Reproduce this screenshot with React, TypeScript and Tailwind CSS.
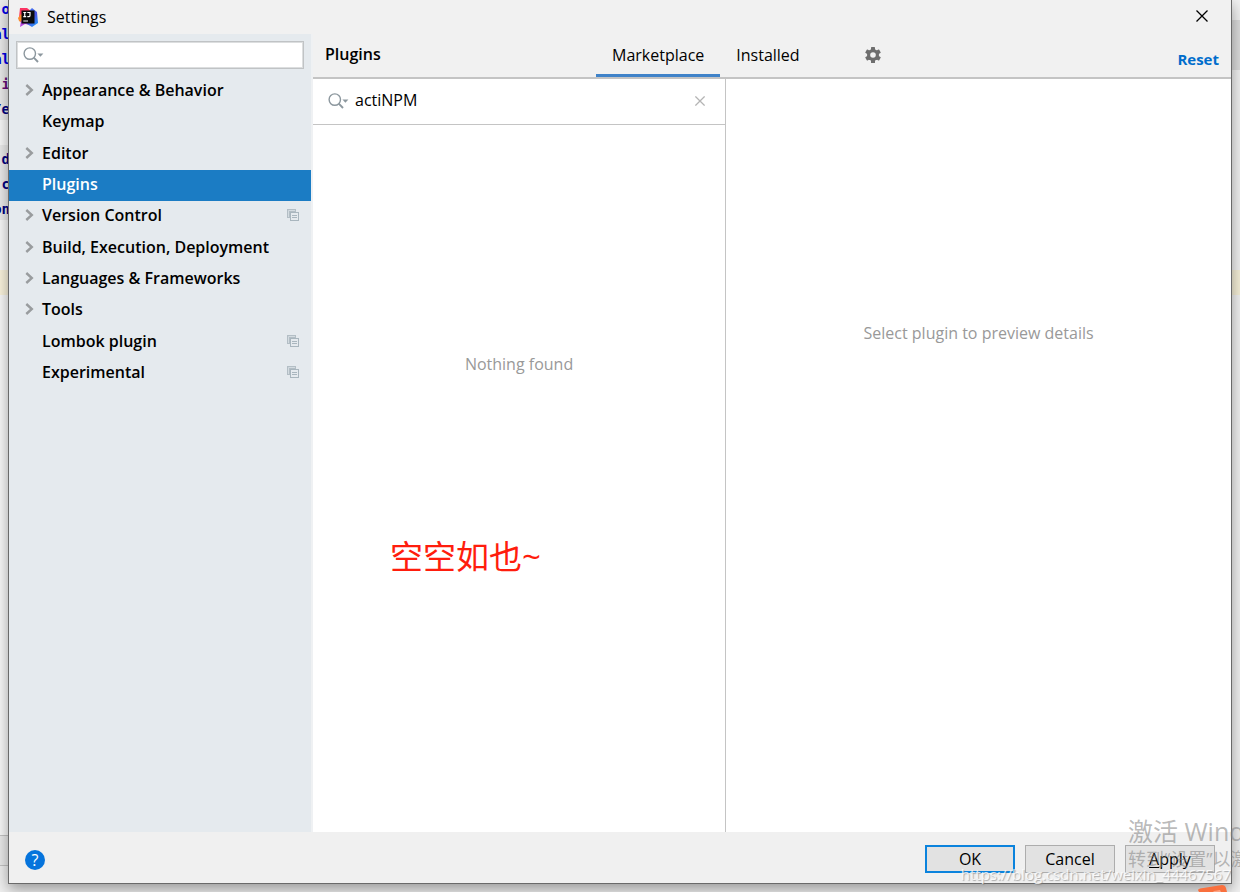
import { useState } from "react";
import type { ReactNode } from "react";

type Section = { label: string; expandable?: boolean; perProject?: boolean };

const sections: Section[] = [
  { label: "Appearance & Behavior", expandable: true },
  { label: "Keymap" },
  { label: "Editor", expandable: true },
  { label: "Plugins" },
  { label: "Version Control", expandable: true, perProject: true },
  { label: "Build, Execution, Deployment", expandable: true },
  { label: "Languages & Frameworks", expandable: true },
  { label: "Tools", expandable: true },
  { label: "Lombok plugin", perProject: true },
  { label: "Experimental", perProject: true },
];

function IdeLogo() {
  return (
    <svg width="20" height="20" viewBox="0 0 20 20" aria-hidden="true">
      <defs>
        <linearGradient id="logo-blue" x1="0" y1="0" x2="0.6" y2="1">
          <stop offset="0" stopColor="#3f7df2" />
          <stop offset="0.6" stopColor="#4b55e6" />
          <stop offset="1" stopColor="#2a8df5" />
        </linearGradient>
        <linearGradient id="logo-pink" x1="0" y1="0" x2="0" y2="1">
          <stop offset="0" stopColor="#fb3163" />
          <stop offset="1" stopColor="#ff4a5a" />
        </linearGradient>
      </defs>
      <path d="M2 1 L9 1 L13 4 L8 12 L1 10 Z" fill="url(#logo-pink)" />
      <path d="M0 11 L3 7 L6 12 L4 16 L1 14 Z" fill="#fb8a2e" />
      <path d="M3 14 L8 13 L12 18 L7 17 L2 20 Z" fill="#b544de" />
      <path d="M12 3 L14 1 L19 5 L20 16 L14 20 L9 17 Z" fill="url(#logo-blue)" />
      <rect x="3.5" y="3.5" width="13" height="13" fill="#0b0b0d" />
      <path d="M5.3 5.5H8.2M6.75 5.5V9.7M5.3 9.7H8.2M9.3 5.5H12V8.4Q12 9.7 10.6 9.7H9.3" fill="none" stroke="#fff" strokeWidth="1.2" />
      <path d="M5.3 14H10" stroke="#c8c8c8" strokeWidth="1.2" />
    </svg>
  );
}

function SearchIcon() {
  return (
    <svg width="21" height="16" viewBox="0 0 21 16" className="shrink-0" aria-hidden="true">
      <circle cx="6.8" cy="6.6" r="5.7" fill="none" stroke="#8c979e" strokeWidth="1.4" />
      <path d="M10.8 10.7 L15 15" stroke="#8c979e" strokeWidth="1.9" />
      <path d="M14.4 6.4 H20.4 L17.4 9.8 Z" fill="#8c979e" />
    </svg>
  );
}

function Chevron() {
  return (
    <svg width="9" height="12" viewBox="0 0 9 12" aria-hidden="true">
      <path d="M1.3 1 L6.8 6 L1.3 11" fill="none" stroke="#999c9e" strokeWidth="2.4" />
    </svg>
  );
}

function ProjectIcon() {
  return (
    <svg width="12" height="12" viewBox="0 0 12 12" role="img" aria-label="For current project">
      <path d="M0 0 H9 V3 H3 V9 H0 Z" fill="#b3bec5" />
      <path d="M1.5 8 V1.5 H8" fill="none" stroke="#d3dbe0" />
      <rect x="3.5" y="3.5" width="8" height="8" fill="#e5eaee" stroke="#a9b6be" />
      <path d="M5 6.5 H10 M5 8.5 H10" stroke="#a9b6be" />
    </svg>
  );
}

function Cross({ size, className, width }: { size: number; className: string; width: number }) {
  return (
    <svg width={size} height={size} viewBox="0 0 12 12" className={className} aria-hidden="true">
      <path d="M0.5 0.5 L11.5 11.5 M11.5 0.5 L0.5 11.5" stroke="currentColor" strokeWidth={width} />
    </svg>
  );
}

function Gear() {
  return (
    <svg width="16" height="16" viewBox="0 0 16 16" aria-hidden="true">
      <g fill="#6e6e6e">
        <rect x="6" y="0" width="4" height="16" rx="0.6" />
        <rect x="6" y="0" width="4" height="16" rx="0.6" transform="rotate(60 8 8)" />
        <rect x="6" y="0" width="4" height="16" rx="0.6" transform="rotate(120 8 8)" />
        <circle cx="8" cy="8" r="6" />
      </g>
      <circle cx="8" cy="8" r="2.8" fill="#f2f2f2" />
    </svg>
  );
}

function CodeLine({ children, className }: { children?: ReactNode; className: string }) {
  return <div className={"flex h-[25px] shrink-0 items-center justify-end " + className}>{children}</div>;
}

function EditorLeft() {
  return (
    <div aria-hidden="true" className="flex w-2 shrink-0 flex-col overflow-hidden bg-[#fafafa] font-['DejaVu_Sans_Mono',monospace] text-sm font-bold text-[#0000e6]">
      <div className="-mt-[5px] -mr-0.5 flex flex-col">
        <CodeLine className="bg-[#ececec] pt-0.5">o</CodeLine>
        <CodeLine className="bg-[#ececec] pt-0.5">al</CodeLine>
        <CodeLine className="bg-[#ececec] pt-0.5">al</CodeLine>
        <CodeLine className="bg-[#ececec] pt-0.5 text-[#660e7a]">i</CodeLine>
        <CodeLine className="bg-[#ececec] pt-0.5 text-[#000080]">/e</CodeLine>
        <CodeLine className="bg-[#fafafa]" />
        <CodeLine className="bg-[#ececec] pt-0.5 text-[#000080]">d</CodeLine>
        <CodeLine className="bg-[#ececec] pt-0.5 text-[#000080]">c</CodeLine>
        <CodeLine className="bg-[#ececec] pt-0.5 text-[#000080]">on</CodeLine>
        <CodeLine className="bg-[#fafafa]" />
        <CodeLine className="bg-[#fafafa]" />
        <CodeLine className="bg-[#fcf5de]" />
      </div>
      <div className="grow" />
      <div className="h-[31px] shrink-0 border-y border-[#c4c4c4] bg-[#ebebeb]" />
      <div className="h-[26px] shrink-0 bg-[#f0f0f0]" />
    </div>
  );
}

function EditorRight() {
  return (
    <div aria-hidden="true" className="flex w-2 shrink-0 flex-col bg-[#f2f2f2]">
      <div className="h-5" />
      <div className="h-[50px] bg-[#dcdcdc]" />
      <div className="h-[200px]" />
      <div className="h-[25px] bg-[#f6f0d8]" />
    </div>
  );
}

function Sidebar({ selected, onSelect }: { selected: string; onSelect: (s: string) => void }) {
  return (
    <nav aria-label="Settings sections" className="w-[304px] shrink-0 border-r-2 border-[#eff1f3] bg-[#e5eaee]">
      <div className="px-[7px] pt-[7px]">
        <label className="flex h-7 items-center border border-[#c0c3c5] bg-white pl-1.5 outline-1 -outline-offset-2 outline-[#dcdedf]">
          <SearchIcon />
          <input type="text" aria-label="Search settings" className="min-w-0 grow bg-transparent px-1 outline-none" />
        </label>
      </div>
      <ul className="mt-[7px] grid h-[313px] auto-rows-fr">
        {sections.map((s) => {
          const active = s.label === selected;
          return (
            <li key={s.label} className="flex">
              <button
                type="button"
                onClick={() => onSelect(s.label)}
                className={
                  active
                    ? "flex grow items-center bg-[#1b7cc4] pr-3 pb-[3px] pl-4 text-left font-semibold text-white"
                    : "flex grow items-center pr-3 pb-[3px] pl-4 text-left font-semibold text-black"
                }
              >
                <span className="flex w-[17px] shrink-0">{s.expandable && <Chevron />}</span>
                <span className="grow whitespace-nowrap">{s.label}</span>
                {s.perProject && <ProjectIcon />}
              </button>
            </li>
          );
        })}
      </ul>
    </nav>
  );
}

function PluginsHeader({ tab, onTab }: { tab: string; onTab: (t: string) => void }) {
  return (
    <header className="flex h-[45px] shrink-0 border-b-2 border-[#c4c4c4] pr-3 pl-3">
      <h1 className="flex w-[271px] shrink-0 items-center pb-[3px] font-semibold">Plugins</h1>
      <div role="tablist" className="flex">
        {["Marketplace", "Installed"].map((t) => (
          <button
            key={t}
            type="button"
            role="tab"
            aria-selected={t === tab}
            onClick={() => onTab(t)}
            className={
              t === tab
                ? "border-b-3 border-[#4083c9] px-4 pt-0.5"
                : "border-b-3 border-transparent px-4 pt-0.5"
            }
          >
            {t}
          </button>
        ))}
      </div>
      <button type="button" aria-label="Plugin options" className="ml-[49px] flex items-center pb-0.5">
        <Gear />
      </button>
      <a href="#reset" className="ml-auto self-center pt-1.5 text-[15px] font-bold text-[#006dcc]">
        Reset
      </a>
    </header>
  );
}

function Watermarks() {
  return (
    <div aria-hidden="true" className="pointer-events-none absolute inset-0 z-20 overflow-hidden">
      <div className="absolute bottom-0 left-[1128px] flex h-[77px] flex-col whitespace-nowrap text-[#808080]/55">
        <span className="h-8 text-[25px] leading-8">激活 Windows</span>
        <span className="h-6 text-[18px] leading-6">转到“设置”以激活 Windows。</span>
      </div>
      <span className="absolute right-[9px] bottom-2 text-[15px] leading-5 text-white/80 [text-shadow:1px_1px_1px_rgba(120,120,120,0.6)]">
        https://blog.csdn.net/weixin_44467567
      </span>
      <svg className="absolute right-3 bottom-0" width="30" height="7" viewBox="0 0 30 7">
        <path d="M1 7 L0 5 Q0 4 2 3.5 L24 0 Q27 0 28 3 L29 7 Z" fill="#f9703e" />
        <path d="M15 7 L16 6 L22 5 L23 7 Z" fill="#fba585" />
      </svg>
    </div>
  );
}

export default function App() {
  const [selected, setSelected] = useState("Plugins");
  const [tab, setTab] = useState("Marketplace");
  const [query, setQuery] = useState("actiNPM");

  return (
    <div className="relative flex min-h-screen overflow-hidden bg-[#f0f0f0] font-['Open_Sans','Noto_Sans_CJK_SC',sans-serif] text-base leading-5 text-black">
      <EditorLeft />
      <div className="relative z-10 mb-2 flex min-w-0 grow flex-col border border-t-0 border-[#6a6a6a] bg-[#f1f1f1] shadow-[0_5px_14px_rgba(0,0,0,0.38)]">
        <div className="flex h-[34px] shrink-0 items-center pr-[23px] pl-[9px]">
          <IdeLogo />
          <span className="ml-[9px]">Settings</span>
          <button type="button" aria-label="Close" className="ml-auto pb-0.5">
            <Cross size={12} width={1.3} className="text-black" />
          </button>
        </div>

        <div className="flex grow">
          <Sidebar selected={selected} onSelect={setSelected} />
          <main className="flex min-w-0 grow flex-col">
            <PluginsHeader tab={tab} onTab={setTab} />
            <div className="flex grow bg-white">
              <section className="flex w-[45%] shrink-0 flex-col border-r border-[#c4c4c4]">
                <div className="flex h-[46px] shrink-0 items-center border-b border-[#c4c4c4] pr-5 pb-0.5 pl-[15px]">
                  <SearchIcon />
                  <input
                    type="text"
                    aria-label="Search plugins"
                    value={query}
                    onChange={(e) => setQuery(e.target.value)}
                    className="ml-1.5 min-w-0 grow bg-transparent pb-0.5 outline-none"
                  />
                  <button type="button" aria-label="Clear search" onClick={() => setQuery("")}>
                    <Cross size={10} width={1.5} className="text-[#b4b4b4]" />
                  </button>
                </div>
                <p className="pt-[229px] text-center text-[#999999]">Nothing found</p>
                <p className="mt-[159px] pl-[77px] text-[33px] leading-[48px] text-[#ff1d0d]">空空如也~</p>
              </section>
              <section className="grow pt-[244px]">
                <p className="text-center text-[#999999]">Select plugin to preview details</p>
              </section>
            </div>
          </main>
        </div>

        <footer className="flex h-[51px] shrink-0 items-center bg-[#f0f0f0] pt-0.5 pr-4 pl-4">
          <button
            type="button"
            aria-label="Help"
            className="mt-0.5 flex size-5 items-center justify-center rounded-full bg-[#0674dc] text-white"
          >
            ?
          </button>
          <div className="ml-auto flex gap-2.5">
            <button type="button" className="h-7 w-[90px] border-2 border-[#0b83dd] bg-[#e2e2e2]">
              OK
            </button>
            <button type="button" className="h-7 w-[90px] border border-[#adadad] bg-[#e2e2e2]">
              Cancel
            </button>
            <button type="button" className="h-7 w-[90px] border border-[#adadad] bg-[#e2e2e2]">
              <span className="underline underline-offset-2">A</span>pply
            </button>
          </div>
        </footer>
      </div>
      <EditorRight />
      <Watermarks />
    </div>
  );
}
